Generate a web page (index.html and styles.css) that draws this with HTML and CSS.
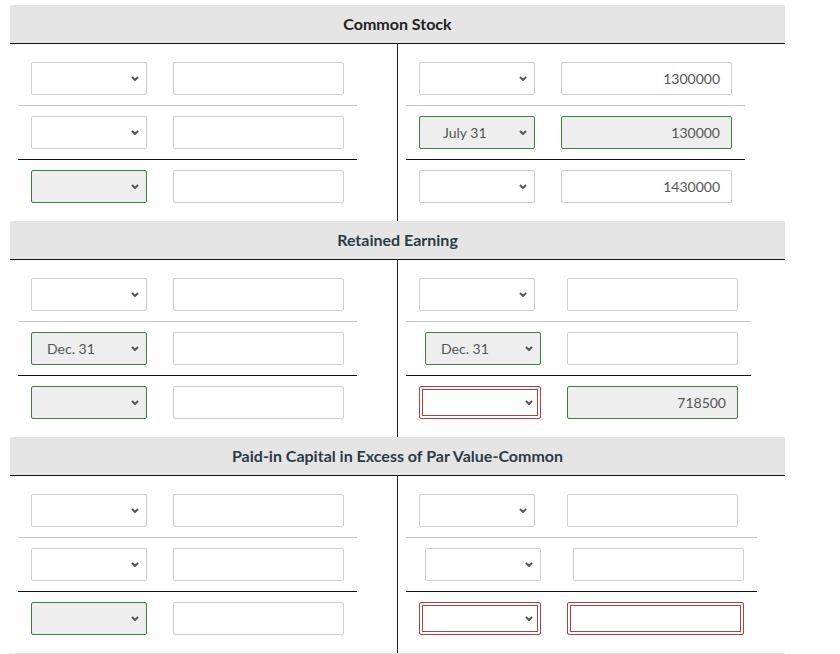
FILE: index.html
```html
<!DOCTYPE html>
<html lang="en">
<head>
 <meta charset="UTF-8">
 <title>T-Accounts</title>
 <link rel="stylesheet" href="styles.css">
</head>
<body>
 <div class="ledger">

 <!-- Common Stock -->
 <section class="account">
 <h2 class="account-title dark">Common Stock</h2>
 <div class="t-body">
 <div class="side debit">
 <div class="row">
 <div class="select"><span></span><svg class="chev" viewBox="0 0 8 5"><polyline points="1,1 4,4 7,1"/></svg></div>
 <div class="field"></div>
 </div>
 <div class="row rule">
 <div class="select"><span></span><svg class="chev" viewBox="0 0 8 5"><polyline points="1,1 4,4 7,1"/></svg></div>
 <div class="field"></div>
 </div>
 <div class="row last">
 <div class="select ok"><span></span><svg class="chev" viewBox="0 0 8 5"><polyline points="1,1 4,4 7,1"/></svg></div>
 <div class="field"></div>
 </div>
 </div>
 <div class="side credit">
 <div class="row">
 <div class="select"><span></span><svg class="chev" viewBox="0 0 8 5"><polyline points="1,1 4,4 7,1"/></svg></div>
 <div class="field num">1300000</div>
 </div>
 <div class="row rule">
 <div class="select ok"><span class="indent">July 31</span><svg class="chev" viewBox="0 0 8 5"><polyline points="1,1 4,4 7,1"/></svg></div>
 <div class="field num ok">130000</div>
 </div>
 <div class="row last">
 <div class="select"><span></span><svg class="chev" viewBox="0 0 8 5"><polyline points="1,1 4,4 7,1"/></svg></div>
 <div class="field num">1430000</div>
 </div>
 </div>
 </div>
 </section>

 <!-- Retained Earning -->
 <section class="account">
 <h2 class="account-title">Retained Earning</h2>
 <div class="t-body">
 <div class="side debit">
 <div class="row">
 <div class="select"><span></span><svg class="chev" viewBox="0 0 8 5"><polyline points="1,1 4,4 7,1"/></svg></div>
 <div class="field"></div>
 </div>
 <div class="row rule">
 <div class="select ok"><span>Dec. 31</span><svg class="chev" viewBox="0 0 8 5"><polyline points="1,1 4,4 7,1"/></svg></div>
 <div class="field"></div>
 </div>
 <div class="row last">
 <div class="select ok"><span></span><svg class="chev" viewBox="0 0 8 5"><polyline points="1,1 4,4 7,1"/></svg></div>
 <div class="field"></div>
 </div>
 </div>
 <div class="side credit wide">
 <div class="row">
 <div class="select"><span></span><svg class="chev" viewBox="0 0 8 5"><polyline points="1,1 4,4 7,1"/></svg></div>
 <div class="field"></div>
 </div>
 <div class="row rule">
 <div class="select ok end"><span>Dec. 31</span><svg class="chev" viewBox="0 0 8 5"><polyline points="1,1 4,4 7,1"/></svg></div>
 <div class="field"></div>
 </div>
 <div class="row last">
 <div class="select bad"><span></span><svg class="chev" viewBox="0 0 8 5"><polyline points="1,1 4,4 7,1"/></svg></div>
 <div class="field num ok">718500</div>
 </div>
 </div>
 </div>
 </section>

 <!-- Paid-in Capital -->
 <section class="account">
 <h2 class="account-title">Paid-in Capital in Excess of Par Value-Common</h2>
 <div class="t-body">
 <div class="side debit">
 <div class="row">
 <div class="select"><span></span><svg class="chev" viewBox="0 0 8 5"><polyline points="1,1 4,4 7,1"/></svg></div>
 <div class="field"></div>
 </div>
 <div class="row rule">
 <div class="select"><span></span><svg class="chev" viewBox="0 0 8 5"><polyline points="1,1 4,4 7,1"/></svg></div>
 <div class="field"></div>
 </div>
 <div class="row last">
 <div class="select ok"><span></span><svg class="chev" viewBox="0 0 8 5"><polyline points="1,1 4,4 7,1"/></svg></div>
 <div class="field"></div>
 </div>
 </div>
 <div class="side credit wider">
 <div class="row">
 <div class="select"><span></span><svg class="chev" viewBox="0 0 8 5"><polyline points="1,1 4,4 7,1"/></svg></div>
 <div class="field"></div>
 </div>
 <div class="row rule">
 <div class="select end"><span></span><svg class="chev" viewBox="0 0 8 5"><polyline points="1,1 4,4 7,1"/></svg></div>
 <div class="field end"></div>
 </div>
 <div class="row last">
 <div class="select bad"><span></span><svg class="chev" viewBox="0 0 8 5"><polyline points="1,1 4,4 7,1"/></svg></div>
 <div class="field bad"></div>
 </div>
 </div>
 </div>
 </section>

 </div>
</body>
</html>
```

FILE: styles.css
```css
body {
margin: 0;
font-family: Lato, "Liberation Sans", sans-serif;
background: #fff;
}
.ledger {
width: 775px;
margin: 5px 0 0 10px;
border-bottom: 1px solid #e6e6e6;
}
.account-title {
margin: 0;
height: 38px;
line-height: 38px;
background: #e5e5e5;
border-bottom: 1px solid #111;
text-align: center;
font-size: 16px;
font-weight: bold;
color: #2d3b45;
}
.account-title.dark {
color: #222;
}
.t-body {
display: flex;
}
.side {
width: 387px;
padding: 8px 0 8px 8px;
box-sizing: border-box;
display: flex;
flex-direction: column;
align-items: flex-start;
--a: 116px;
--b: 171px;
}
.side.debit {
width: 388px;
border-right: 1px solid #222;
}
.side.wide {
--a: 122px;
}
.side.wider {
--a: 122px;
--b: 177px;
}
.row {
display: grid;
grid-template-columns: var(--a) var(--b);
column-gap: 26px;
padding: 10px 13px;
border-bottom: 1px solid #c8c8c8;
}
.row.rule {
border-bottom-color: #111;
}
.row.last {
border-bottom: none;
}
.select, .field {
height: 33px;
box-sizing: border-box;
border: 1px solid #cfcfcf;
border-radius: 2px;
background: #fff;
font-size: 14px;
color: #555;
}
.select {
width: 116px;
display: flex;
align-items: center;
justify-content: space-between;
padding: 0 7px 0 15px;
}
.select .indent {
padding-left: 8px;
}
.chev {
width: 8px;
height: 5px;
fill: none;
stroke: #555;
stroke-width: 2;
}
.field {
width: 171px;
line-height: 31px;
padding: 0 11px;
}
.field.num {
text-align: right;
}
.end {
justify-self: end;
}
.ok {
border-color: #3f7f3f;
background: #eee;
}
.bad {
border-color: #b5403f;
box-shadow: inset 0 0 0 2px #fff, inset 0 0 0 3px #b5403f;
}
.select.bad {
width: 122px;
}
.field.bad {
width: 177px;
}
```
